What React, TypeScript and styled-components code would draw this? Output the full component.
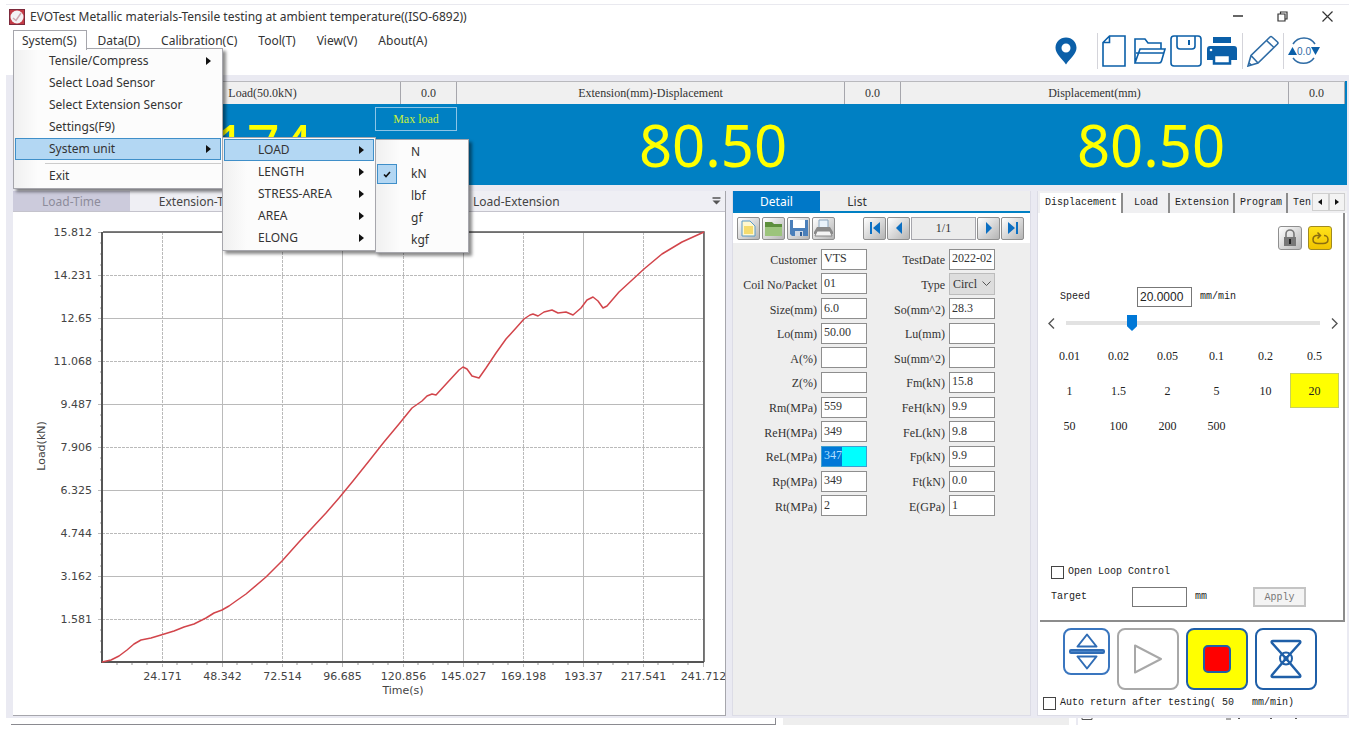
import React from 'react';
import styled, { createGlobalStyle, css } from 'styled-components';

const sans = "'Noto Sans', 'Open Sans', sans-serif";
const serif = "'Liberation Serif', serif";
const mono = "'Liberation Mono', monospace";

const color = {
  blue: '#0080c3',
  icon: '#0b5fa8',
  frame: '#eaeaf2',
  panel: '#eeeeee',
  line: '#a6a6ac',
  yellow: '#ffff00',
  highlight: '#b3d7f3',
  highlightLine: '#3f8fc9',
};

const GlobalStyle = createGlobalStyle`
  *, *::before, *::after { box-sizing: border-box; }
  body { margin: 0; background: #fff; color: #333; font: 12px/16px ${sans}; }
  button, input, select { font: inherit; color: inherit; margin: 0; border-radius: 0; }
  button { background: none; border: 0; padding: 0; }
  ul { list-style: none; margin: 0; padding: 0; }
  svg { display: block; }
`;

/* ---------- window frame ---------- */

const Page = styled.div`
  min-height: 100vh;
  padding: 4px 6px 0;
`;

const Window = styled.main`
  border-top: 1px solid #e9e9ef;
  background: ${color.frame};
`;

const Header = styled.header`
  display: flex;
  justify-content: space-between;
  height: 70px;
  background: #fff;
`;

const TitleBar = styled.div`
  display: flex;
  align-items: center;
  gap: 5px;
  height: 24px;
  padding-left: 3px;
`;

const Title = styled.h1`
  margin: 0;
  font-size: 12px;
  font-weight: 400;
  line-height: 16px;
`;

const MenuBar = styled.nav`
  display: flex;
  gap: 2px;
  padding-left: 7px;
  height: 22px;
`;

const MenuSlot = styled.div`
  position: relative;
`;

const MenuTitle = styled.button<{ $open?: boolean }>`
  height: 20px;
  padding: 0 9px 0 8px;
  margin-top: 1px;
  border: 1px solid transparent;
  border-bottom: 0;
  ${(p) =>
    p.$open &&
    css`
      position: relative;
      z-index: 4;
      border-color: ${color.line};
      background: #fff;
    `}
`;

const HeaderTools = styled.div`
  display: flex;
  flex-direction: column;
  align-items: flex-end;
`;

const WindowButtons = styled.div`
  display: flex;
  gap: 20px;
  height: 24px;
  padding-right: 9px;
`;

const WindowButton = styled.button`
  display: grid;
  place-items: center;
  width: 25px;
  height: 22px;
`;

const Toolbar = styled.div`
  display: flex;
  align-items: center;
  gap: 4px;
  height: 44px;
  padding-right: 29px;
`;

const ToolButton = styled.button<{ $width?: number; $after?: number }>`
  display: grid;
  justify-items: ${(p) => (p.$width ? 'start' : 'center')};
  align-items: center;
  width: ${(p) => p.$width ?? 32}px;
  height: 34px;
  margin-right: ${(p) => p.$after ?? 0}px;
`;

const ToolSeparator = styled.span`
  width: 1px;
  height: 36px;
  background: #d4d4da;
`;

/* ---------- drop-down menus ---------- */

const Menu = styled.ul<{ $top: number; $width: number; $root?: boolean }>`
  position: absolute;
  z-index: 3;
  top: ${(p) => p.$top}px;
  left: ${(p) => (p.$root ? '0' : '100%')};
  width: ${(p) => p.$width}px;
  margin-left: ${(p) => (p.$root ? 0 : 1)}px;
  padding: 1px;
  border: 1px solid ${color.line};
  background: linear-gradient(90deg, #f0f0f0 0, #fcfcfc 24px);
  box-shadow: 3px 3px 3px rgba(0, 0, 0, 0.45);
`;

const MenuItem = styled.li<{ $divided?: boolean }>`
  position: relative;
  ${(p) =>
    p.$divided &&
    css`
      margin-top: 3px;
      padding-top: 2px;
      background: linear-gradient(#ccc, #ccc) 30px 0 / 100% 1px no-repeat;
    `}
`;

const MenuEntry = styled.button<{ $active?: boolean }>`
  display: flex;
  align-items: center;
  justify-content: space-between;
  width: 100%;
  height: 22px;
  padding: 0 9px 0 33px;
  border: 1px solid ${(p) => (p.$active ? color.highlightLine : 'transparent')};
  background: ${(p) => (p.$active ? color.highlight : 'transparent')};
  text-align: left;
`;

const CheckMark = styled.span`
  position: absolute;
  top: 1px;
  left: 0;
  display: grid;
  place-items: center;
  width: 20px;
  height: 20px;
  border: 1px solid ${color.highlightLine};
  background: ${color.highlight};
`;

const Arrow = () => (
  <svg width="5" height="8" viewBox="0 0 5 8" aria-hidden="true">
    <path d="M0 0L5 4L0 8z" fill="#111" />
  </svg>
);

/* ---------- readouts ---------- */

const Readouts = styled.section`
  display: grid;
  grid-template-columns: repeat(3, 1fr);
  margin: 6px 2px 0 7px;
  border-right: 2px solid ${color.blue};
  background: ${color.blue};
`;

const Readout = styled.div`
  position: relative;
`;

const ReadoutHead = styled.div<{ $indent?: number }>`
  display: grid;
  grid-template-columns: 1fr 57px;
  height: 23px;
  padding-left: ${(p) => p.$indent ?? 0}px;
  border-top: 1px solid #b9b9bd;
  background: #f0f0f0;
  font: 12px/22px ${serif};
  text-align: center;
`;

const ReadoutRate = styled.span`
  border: solid ${color.line};
  border-width: 0 1px;
`;

const ReadoutValue = styled.output<{ $indent: number }>`
  display: block;
  height: 81px;
  padding-left: ${(p) => p.$indent}px;
  color: ${color.yellow};
  font-family: ${sans};
  font-size: 58px;
  line-height: 81px;
  text-align: center;
`;

const MaxLoad = styled.button`
  position: absolute;
  top: 26px;
  right: 0;
  width: 82px;
  height: 24px;
  border: 1px solid #8cc4e6;
  color: #c8f03c;
  font: 12px/16px ${serif};
`;

/* ---------- workspace ---------- */

const Workspace = styled.div`
  display: grid;
  grid-template-columns: minmax(0, 1fr) 299px 310px;
  gap: 6px;
  padding: 6px 2px 2px 7px;
`;

const ChartPanel = styled.section`
  border: solid ${color.line};
  border-width: 0 1px 1px 0;
  background: #fff;
`;

const ChartTabs = styled.div`
  display: flex;
  align-items: center;
  height: 21px;
  border-bottom: 1px solid #c4c3cc;
  background: #efeff4;
`;

const ChartTab = styled.button<{ $active?: boolean; $before?: number }>`
  height: 20px;
  margin-left: ${(p) => p.$before ?? 0}px;
  padding: 1px 29px 0;
  color: ${(p) => (p.$active ? '#8d8c9b' : '#444')};
  background: ${(p) => (p.$active ? '#cccbdc' : 'transparent')};
`;

const TabOverflow = styled.button`
  margin-left: auto;
  padding: 0 4px;
`;

const ChartSvg = styled.svg`
  width: 100%;
  height: auto;
  font-family: 'DejaVu Sans', sans-serif;
  font-size: 11px;
  fill: #444;
`;

/* ---------- detail panel ---------- */

const DetailPanel = styled.section`
  background: ${color.panel};
  border: solid #dcdce6;
  border-width: 0 1px 1px;
`;

const DetailTabs = styled.div`
  display: flex;
  height: 22px;
  border-bottom: 2px solid ${color.blue};
`;

const DetailTab = styled.button<{ $active?: boolean }>`
  width: ${(p) => (p.$active ? 87 : 74)}px;
  padding-top: 1px;
  color: ${(p) => (p.$active ? '#fff' : '#333')};
  background: ${(p) => (p.$active ? '#0078c8' : 'transparent')};
`;

const RecordBar = styled.div`
  display: flex;
  align-items: center;
  gap: 2px;
  height: 30px;
  padding: 0 4px;
  background: #fff;
`;

const RecordButton = styled.button`
  display: grid;
  place-items: center;
  width: 23px;
  height: 23px;
  border: 1px solid #8f8f8f;
  border-radius: 2px;
  background: linear-gradient(135deg, #fff, #b4b4b4);
`;

const RecordNav = styled.div`
  display: flex;
  margin-left: 26px;
  gap: 1px;
`;

const RecordCount = styled.output`
  width: 65px;
  border: 1px solid ${color.line};
  background: #ececec;
  font: 12px/21px ${serif};
  text-align: center;
`;

const DetailForm = styled.form`
  display: grid;
  grid-template-columns: 79px 46px 74px 46px;
  grid-auto-rows: 1fr;
  column-gap: 4px;
  align-items: center;
  height: 271px;
  margin-top: 4px;
  padding-left: 5px;
  font: 12px/16px ${serif};
`;

const FieldLabel = styled.label`
  padding-top: 2px;
  text-align: right;
  white-space: nowrap;
`;

const Field = styled.input<{ $selected?: boolean }>`
  width: 100%;
  height: 21px;
  padding: 0 2px 1px;
  border: 1px solid ${(p) => (p.$selected ? '#3f9fd0' : '#8e8e8e')};
  background: ${(p) => (p.$selected ? 'linear-gradient(90deg, #0078d7 20px, #00ffff 20px)' : '#fff')};
  color: ${(p) => (p.$selected ? '#b4e0ff' : '#333')};
`;

const TypeBox = styled.div`
  position: relative;
`;

const TypeSelect = styled.select`
  width: 100%;
  height: 22px;
  padding: 0 14px 0 3px;
  appearance: none;
  border: 1px solid #bcbcbc;
  background: #dddddd;
`;

const TypeChevron = styled.svg`
  position: absolute;
  top: 8px;
  right: 4px;
  pointer-events: none;
`;

/* ---------- control panel ---------- */

const ControlPanel = styled.aside`
  display: flex;
  flex-direction: column;
  padding: 2px 2px 0;
  background: linear-gradient(#f0f0f2 22px, #fff 22px);
  border: solid #dcdce6;
  border-width: 0 0 1px 1px;
  font: 10px/16px ${mono};
  color: #222;
`;

const ControlTabs = styled.div`
  display: flex;
  height: 20px;
`;

const ControlTab = styled.button<{ $active?: boolean; $cut?: boolean }>`
  flex: none;
  width: ${(p) => (p.$cut ? '24px' : 'auto')};
  overflow: hidden;
  padding: 0 4px 0 5px;
  border-right: ${(p) => (p.$cut ? 0 : 2)}px solid #8c8c8c;
  background: ${(p) => (p.$active ? '#fff' : 'transparent')};
`;

const TabScroll = styled.button`
  display: grid;
  place-items: center;
  flex: 1;
  height: 18px;
  border: 1px solid #cfcfcf;
  background: #f3f3f3;
`;

const ControlBody = styled.div`
  flex: 1;
  display: flex;
  flex-direction: column;
  padding: 13px 4px 13px 5px;
  border: solid #8c8c8c;
  border-width: 0 2px 2px 0;
`;

const ModeRow = styled.div`
  display: flex;
  justify-content: flex-end;
  gap: 6px;
  padding-right: 7px;
`;

const ModeButton = styled.button<{ $on?: boolean }>`
  display: grid;
  place-items: center;
  width: 24px;
  height: 24px;
  border: 1px solid ${(p) => (p.$on ? '#a08a20' : '#8f8f8f')};
  border-radius: 3px;
  background: ${(p) => (p.$on ? 'linear-gradient(#ffe21a, #f0c400)' : 'linear-gradient(135deg, #fff, #b8b8b8)')};
`;

const SpeedRow = styled.div`
  display: grid;
  grid-template-columns: 77px 55px 1fr;
  align-items: center;
  margin-top: 37px;
  padding-left: 15px;
`;

const TextBox = styled.input`
  width: 55px;
  height: 20px;
  padding: 0 2px;
  border: 1px solid #777;
  background: #fff;
  font: 12px/16px 'Liberation Sans', sans-serif;
`;

const Unit = styled.span`
  padding-left: 8px;
`;

const SliderRow = styled.div`
  display: flex;
  align-items: center;
  justify-content: space-between;
  gap: 11px;
  margin-top: 6px;
  height: 20px;
  padding: 0 1px 0 3px;
`;

const Slider = styled.input`
  flex: 1;
  min-width: 0;
  height: 16px;
  appearance: none;
  background: linear-gradient(#e2e2e2, #e2e2e2) 0 6px / 100% 4px no-repeat;
  &::-webkit-slider-thumb {
    appearance: none;
    width: 10px;
    height: 16px;
    background: #0078d7;
    clip-path: polygon(0 0, 100% 0, 100% 70%, 50% 100%, 0 70%);
  }
`;

const Presets = styled.div`
  display: grid;
  grid-template-columns: repeat(6, 1fr);
  margin-top: 5px;
`;

const Preset = styled.button<{ $on?: boolean }>`
  height: 35px;
  border: 1px solid ${(p) => (p.$on ? '#c8d060' : 'transparent')};
  background: ${(p) => (p.$on ? color.yellow : 'transparent')};
  font: 12px/16px ${serif};
`;

const Check = styled.label`
  display: flex;
  align-items: center;
  gap: 4px;
  line-height: 18px;
  white-space: pre;
`;

const CheckBox = styled.input`
  appearance: none;
  width: 13px;
  height: 13px;
  border: 1px solid #444;
  background: #fff;
`;

const LoopBox = styled.div`
  margin-top: auto;
  padding-left: 6px;
`;

const TargetRow = styled.div`
  display: grid;
  grid-template-columns: 81px 55px 1fr 53px;
  align-items: center;
  height: 20px;
  margin-top: 6px;
  padding-right: 33px;
  line-height: 18px;
`;

const ApplyButton = styled.button`
  height: 20px;
  border: 2px solid #c4c4c4;
  background: #f4f4f4;
  color: #777;
`;

const Actions = styled.div`
  display: flex;
  gap: 7px;
  padding: 6px 0 4px 23px;
`;

const Action = styled.button<{ $size?: number; $tone?: string; $fill?: string }>`
  display: grid;
  place-items: center;
  width: ${(p) => p.$size ?? 62}px;
  height: ${(p) => p.$size ?? 62}px;
  border: 2px solid ${(p) => p.$tone ?? '#1f5fa8'};
  border-radius: 8px;
  background: ${(p) => p.$fill ?? '#fff'};
`;

const AutoReturn = styled.div`
  padding: 0 0 3px 3px;
`;

/* ---------- lower window edge ---------- */

const Behind = styled.div`
  display: grid;
  grid-template-columns: 765px 286px 1fr;
  gap: 7px;
  height: 7px;
  padding-left: 5px;
`;

const BehindPane = styled.div<{ $kind: 'chart' | 'detail' | 'control' }>`
  background: ${(p) => (p.$kind === 'detail' ? color.panel : '#fff')};
  border: solid #8a8a90;
  border-width: ${(p) => (p.$kind === 'chart' ? '0 1px 1px 0' : '0')};
  border-left: ${(p) => (p.$kind === 'control' ? `2px solid ${color.frame}` : 0)};
`;

/* ---------- data ---------- */

const yTicks = ['15.812', '14.231', '12.65', '11.068', '9.487', '7.906', '6.325', '4.744', '3.162', '1.581'];
const xTicks = ['24.171', '48.342', '72.514', '96.685', '120.856', '145.027', '169.198', '193.37', '217.541', '241.712'];

const plot = { left: 90, right: 691, top: 20, bottom: 450 };

const curve = [
  [89, 450], [98, 448], [106, 444], [114, 438], [121, 432], [128, 428], [138, 426], [148, 423], [161, 419],
  [171, 415], [181, 412], [193, 406], [201, 401], [209, 398], [216, 394], [223, 389], [233, 382], [253, 365],
  [269, 349], [286, 330], [299, 316], [313, 301], [326, 286], [340, 269], [356, 249], [371, 230], [386, 212],
  [399, 196], [409, 189], [414, 184], [419, 182], [423, 183], [434, 171], [446, 158], [450, 155], [454, 157],
  [459, 164], [466, 166], [473, 156], [483, 141], [493, 127], [503, 116], [511, 107], [517, 103], [520, 102],
  [525, 104], [531, 100], [539, 98], [545, 101], [553, 100], [560, 103], [568, 96], [574, 88], [580, 85],
  [585, 89], [590, 96], [594, 94], [606, 80], [618, 69], [631, 57], [649, 42], [669, 30], [691, 20],
];

const fields: [string, string][] = [
  ['Customer', 'VTS'], ['TestDate', '2022-02'],
  ['Coil No/Packet', '01'], ['Type', 'Circl'],
  ['Size(mm)', '6.0'], ['So(mm^2)', '28.3'],
  ['Lo(mm)', '50.00'], ['Lu(mm)', ''],
  ['A(%)', ''], ['Su(mm^2)', ''],
  ['Z(%)', ''], ['Fm(kN)', '15.8'],
  ['Rm(MPa)', '559'], ['FeH(kN)', '9.9'],
  ['ReH(MPa)', '349'], ['FeL(kN)', '9.8'],
  ['ReL(MPa)', '347'], ['Fp(kN)', '9.9'],
  ['Rp(MPa)', '349'], ['Ft(kN)', '0.0'],
  ['Rt(MPa)', '2'], ['E(GPa)', '1'],
];

const presets = ['0.01', '0.02', '0.05', '0.1', '0.2', '0.5', '1', '1.5', '2', '5', '10', '20', '50', '100', '200', '500'];

/* ---------- parts ---------- */

const UnitMenu = () => (
  <Menu $top={0} $width={94}>
    {['N', 'kN', 'lbf', 'gf', 'kgf'].map((unit) => (
      <MenuItem key={unit}>
        {unit === 'kN' && (
          <CheckMark>
            <svg width="8" height="7" viewBox="0 0 8 7" aria-hidden="true">
              <path d="M1 3.5L3 5.5L7 1" fill="none" stroke="#111" strokeWidth="1.6" />
            </svg>
          </CheckMark>
        )}
        <MenuEntry>{unit}</MenuEntry>
      </MenuItem>
    ))}
  </Menu>
);

const QuantityMenu = () => (
  <Menu $top={-1} $width={154}>
    {['LOAD', 'LENGTH', 'STRESS-AREA', 'AREA', 'ELONG'].map((name) => (
      <MenuItem key={name}>
        <MenuEntry $active={name === 'LOAD'}>
          {name}
          <Arrow />
        </MenuEntry>
        {name === 'LOAD' && <UnitMenu />}
      </MenuItem>
    ))}
  </Menu>
);

const SystemMenu = () => (
  <Menu $root $top={19} $width={210}>
    <MenuItem><MenuEntry>Tensile/Compress<Arrow /></MenuEntry></MenuItem>
    <MenuItem><MenuEntry>Select Load Sensor</MenuEntry></MenuItem>
    <MenuItem><MenuEntry>Select Extension Sensor</MenuEntry></MenuItem>
    <MenuItem><MenuEntry>Settings(F9)</MenuEntry></MenuItem>
    <MenuItem>
      <MenuEntry $active>System unit<Arrow /></MenuEntry>
      <QuantityMenu />
    </MenuItem>
    <MenuItem $divided><MenuEntry>Exit</MenuEntry></MenuItem>
  </Menu>
);

const MainToolbar = () => {
  const s = { fill: 'none', stroke: color.icon, strokeWidth: 1.6 };
  return (
    <Toolbar>
      <ToolButton aria-label="Locate" $after={11}>
        <svg width="22" height="28" viewBox="0 0 22 28">
          <path d="M11 0.5C5 0.5 0.5 5 0.5 10.8C0.5 17 6.5 21 11 27.5C15.500 21 21.500 17 21.500 10.800C21.500 5 17 0.500 11 0.500zM11 6.500a4.500 4.500 0 1 1 0 9a4.500 4.500 0 0 1 0-9z" fill={color.icon} />
        </svg>
      </ToolButton>
      <ToolSeparator />
      <ToolButton aria-label="New" $width={28}>
        <svg width="24" height="32" viewBox="0 0 24 32">
          <path d="M7.500 1H23V31H1V7.500z M7.500 1V7.500H1" {...s} />
        </svg>
      </ToolButton>
      <ToolButton aria-label="Open">
        <svg width="32" height="26" viewBox="0 0 32 26">
          <path d="M1 25V1H11L14 5H27V11M1 25L6 11H31L27.500 23Q27 25 25 25zM2 15H29.500" {...s} />
        </svg>
      </ToolButton>
      <ToolButton aria-label="Save">
        <svg width="32" height="32" viewBox="0 0 32 32">
          <rect x="1" y="1" width="30" height="30" rx="3" {...s} />
          <path d="M7 1V11Q7 14 10 14H22Q25 14 25 11V1" {...s} />
          <path d="M19 5V10" {...s} strokeWidth="2" />
        </svg>
      </ToolButton>
      <ToolButton aria-label="Print">
        <svg width="30" height="28" viewBox="0 0 30 28">
          <rect x="6" y="0" width="18" height="6" fill={color.icon} />
          <path d="M3 9H27Q30 9 30 12V23H24V17H6V23H0V12Q0 9 3 9z" fill={color.icon} />
          <rect x="7" y="18" width="16" height="8.500" fill="#fff" stroke={color.icon} strokeWidth="2.500" />
          <circle cx="4" cy="13" r="1.300" fill="#fff" />
        </svg>
      </ToolButton>
      <ToolSeparator />
      <ToolButton aria-label="Edit">
        <svg width="32" height="32" viewBox="0 0 32 32">
          <path d="M1 31L4 20.500L23 2Q24 1 25 2L30.500 7Q31.500 8 30.500 9L11 28zM4 20.500L11 28M19.500 5.500L27 12.500M1.500 27.500L4.500 30" {...s} stroke="#2f6ca5" />
        </svg>
      </ToolButton>
      <ToolSeparator />
      <ToolButton aria-label="Zero">
        <svg width="32" height="28" viewBox="0 0 32 28">
          <path d="M5 7A13 13 0 0 1 27 7M5 21A13 13 0 0 0 26 21" fill="none" stroke="#2f6ca5" strokeWidth="1.500" />
          <path d="M0 18L4.500 10L9 18zM23 10H32L27.500 18z" fill={color.icon} />
          <text x="16" y="18" textAnchor="middle" fontFamily="Liberation Sans" fontSize="10" fill="#2f6ca5">0.0</text>
        </svg>
      </ToolButton>
    </Toolbar>
  );
};

const Chart = () => {
  const stepX = (plot.right - plot.left) / 10;
  const stepY = (plot.bottom - plot.top) / 10;
  return (
    <ChartSvg viewBox="0 0 712 503" role="img" aria-label="Load over time">
      {xTicks.map((label, i) => {
        const x = Math.round(plot.left + stepX * (i + 1)) - 0.5;
        return (
          <g key={label}>
            <path d={`M${x} ${plot.top}V${plot.bottom + 5}`} stroke="#bababa" strokeDasharray={i % 2 ? undefined : '3 1'} />
            <path d={[1, 2, 3].map((n) => `M${Math.round(x - (stepX * n) / 4)} ${plot.bottom}v3`).join('')} stroke="#999" />
            <text x={x} y={plot.bottom + 18} textAnchor="middle">{label}</text>
          </g>
        );
      })}
      {yTicks.map((label, i) => {
        const y = Math.round(plot.top + stepY * i) + 0.5;
        return (
          <g key={label}>
            <path d={`M${plot.left - 5} ${y}H${plot.right}`} stroke="#bababa" strokeDasharray={i % 2 ? '3 1' : undefined} />
            <path d={[1, 2, 3].map((n) => `M${plot.left - 3} ${Math.round(y + (stepY * n) / 4)}h3`).join('')} stroke="#999" />
            <text x={plot.left - 11} y={y + 3} textAnchor="end">{label}</text>
          </g>
        );
      })}
      <path d={`M${plot.left} ${plot.top}H${plot.right}V${plot.bottom}`} fill="none" stroke="#555" strokeWidth="1.5" />
      <path d={`M${plot.left - 1} ${plot.top}V${plot.bottom}H${plot.right}`} fill="none" stroke="#555" strokeWidth="2" />
      <polyline points={curve.map((p) => p.join(',')).join(' ')} fill="none" stroke="#d2454b" strokeWidth="1.500" strokeLinejoin="round" />
      <text x="390" y="482" textAnchor="middle">Time(s)</text>
      <text transform="translate(32 234) rotate(-90)" textAnchor="middle">Load(kN)</text>
    </ChartSvg>
  );
};

const Detail = () => (
  <DetailPanel>
    <DetailTabs>
      <DetailTab $active>Detail</DetailTab>
      <DetailTab>List</DetailTab>
    </DetailTabs>
    <RecordBar>
      <RecordButton aria-label="New record">
        <svg width="17" height="17" viewBox="0 0 17 17">
          <path d="M2 1H10L15 6V16H2z" fill="#fff8cf" stroke="#5a9ac8" />
          <path d="M4 6H13V14H4z" fill="#f5dc6e" />
        </svg>
      </RecordButton>
      <RecordButton aria-label="Open record">
        <svg width="19" height="17" viewBox="0 0 19 17">
          <path d="M1 2H8L10 4H18V8H1z" fill="#5d8f3c" />
          <path d="M1 7H18V16H1z" fill="#9cc47c" />
        </svg>
      </RecordButton>
      <RecordButton aria-label="Save record">
        <svg width="18" height="18" viewBox="0 0 18 18">
          <path d="M0 1H18V17H2L0 15z" fill="#4a7fba" />
          <path d="M3 1H15V9H3z" fill="#fff" />
          <path d="M5 12H13V17H5z" fill="#cfd8e4" />
          <path d="M10 13H12V17H10z" fill="#2c5c94" />
        </svg>
      </RecordButton>
      <RecordButton aria-label="Print record">
        <svg width="19" height="18" viewBox="0 0 19 18">
          <path d="M5 1H14V9H5z" fill="#eaf3fb" stroke="#8aa5bd" />
          <path d="M3 8H16L19 13V15H0V13z" fill="#8a8a8a" />
          <path d="M3 12H16L18 17H1z" fill="#f4f4f4" stroke="#888" />
        </svg>
      </RecordButton>
      <RecordNav>
        <RecordButton aria-label="First">
          <svg width="12" height="12" viewBox="0 0 12 12"><path d="M1 0H3V12H1zM11 0V12L4 6z" fill="#0b6fc2" /></svg>
        </RecordButton>
        <RecordButton aria-label="Previous">
          <svg width="6" height="12" viewBox="0 0 6 12"><path d="M6 0V12L0 6z" fill="#0b6fc2" /></svg>
        </RecordButton>
        <RecordCount>1/1</RecordCount>
        <RecordButton aria-label="Next">
          <svg width="6" height="12" viewBox="0 0 6 12"><path d="M0 0V12L6 6z" fill="#0b6fc2" /></svg>
        </RecordButton>
        <RecordButton aria-label="Last">
          <svg width="12" height="12" viewBox="0 0 12 12"><path d="M9 0H11V12H9zM1 0V12L8 6z" fill="#0b6fc2" /></svg>
        </RecordButton>
      </RecordNav>
    </RecordBar>
    <DetailForm>
      {fields.map(([label, value]) => (
        <React.Fragment key={label}>
          <FieldLabel htmlFor={label}>{label}</FieldLabel>
          {label === 'Type' ? (
            <TypeBox>
              <TypeSelect id={label}><option>{value}</option></TypeSelect>
              <TypeChevron width="9" height="6" viewBox="0 0 9 6">
                <path d="M0.500 0.500L4.500 4.500L8.500 0.500" fill="none" stroke="#555" />
              </TypeChevron>
            </TypeBox>
          ) : (
            <Field id={label} defaultValue={value} $selected={label === 'ReL(MPa)'} />
          )}
        </React.Fragment>
      ))}
    </DetailForm>
  </DetailPanel>
);

const Chevron = ({ d }: { d: string }) => (
  <svg width="7" height="11" viewBox="0 0 7 11" aria-hidden="true">
    <path d={d} fill="none" stroke="#555" strokeWidth="1.400" />
  </svg>
);

const Control = () => (
  <ControlPanel>
    <ControlTabs>
      <ControlTab $active>Displacement</ControlTab>
      <ControlTab>&nbsp;Load&nbsp;</ControlTab>
      <ControlTab>Extension</ControlTab>
      <ControlTab>Program</ControlTab>
      <ControlTab $cut>Ten</ControlTab>
      <TabScroll aria-label="Previous tabs">
        <svg width="4" height="6" viewBox="0 0 4 6"><path d="M4 0V6L0 3z" fill="#111" /></svg>
      </TabScroll>
      <TabScroll aria-label="Next tabs">
        <svg width="4" height="6" viewBox="0 0 4 6"><path d="M0 0V6L4 3z" fill="#111" /></svg>
      </TabScroll>
    </ControlTabs>
    <ControlBody>
      <ModeRow>
        <ModeButton aria-label="Lock">
          <svg width="14" height="18" viewBox="0 0 14 18">
            <path d="M3 8V5A4 4 0 0 1 11 5V8" fill="none" stroke="#777" strokeWidth="1.600" />
            <rect x="1" y="8" width="12" height="9" fill="#777" />
            <path d="M6 10H8V15H6z" fill="#222" />
          </svg>
        </ModeButton>
        <ModeButton aria-label="Loop" $on>
          <svg width="17" height="14" viewBox="0 0 17 14">
            <path d="M4 4.500C2 5 1 7 1 8.500C1 11 3 12.500 6 12.500H11C14 12.500 16 11 16 8.500C16 6 14 4.500 12 4.500M3.500 4.500H8M5.500 1.500L8.500 4.500L5.500 7.500" fill="none" stroke="#8a6d10" strokeWidth="1.500" />
          </svg>
        </ModeButton>
      </ModeRow>
      <SpeedRow>
        <label htmlFor="speed">Speed</label>
        <TextBox id="speed" defaultValue="20.0000" />
        <Unit>mm/min</Unit>
      </SpeedRow>
      <SliderRow>
        <button aria-label="Slower"><Chevron d="M6 0.500L1 5.500L6 10.500" /></button>
        <Slider type="range" aria-label="Speed" min="0" max="100" defaultValue="25" />
        <button aria-label="Faster"><Chevron d="M1 0.500L6 5.500L1 10.500" /></button>
      </SliderRow>
      <Presets>
        {presets.map((p) => (
          <Preset key={p} $on={p === '20'}>{p}</Preset>
        ))}
      </Presets>
      <LoopBox>
        <Check><CheckBox type="checkbox" />Open Loop Control</Check>
        <TargetRow>
          <label htmlFor="target">Target</label>
          <TextBox id="target" />
          <Unit>mm</Unit>
          <ApplyButton>Apply</ApplyButton>
        </TargetRow>
      </LoopBox>
    </ControlBody>
    <Actions>
      <Action aria-label="Move crosshead" $size={47} $tone="#3a76bf">
        <svg width="36" height="38" viewBox="0 0 36 38" fill="none" stroke="#2f6cb5" strokeWidth="2" strokeLinejoin="round">
          <path d="M18 1.500L27.500 13.500H8.500zM8.500 23.500H27.500L18 35.500z" />
          <rect x="1" y="17" width="34" height="3" rx="1" fill="#4a84c8" />
        </svg>
      </Action>
      <Action aria-label="Start" $tone="#a8a8a8">
        <svg width="30" height="30" viewBox="0 0 30 30" fill="none" stroke="#a8a8a8" strokeWidth="2" strokeLinejoin="round">
          <path d="M2 1.500L28 15L2 28.500z" />
        </svg>
      </Action>
      <Action aria-label="Stop" $fill={color.yellow}>
        <svg width="28" height="28" viewBox="0 0 28 28">
          <rect x="1" y="1" width="26" height="26" rx="4" fill="#f00" stroke="#1f5fa8" strokeWidth="2" />
        </svg>
      </Action>
      <Action aria-label="Return">
        <svg width="32" height="40" viewBox="0 0 32 40" fill="none" stroke="#1f5fa8" strokeWidth="2.500" strokeLinejoin="round">
          <path d="M3 2H29Q31 2 30 4L16 19.500L2 4Q1 2 3 2zM3 38H29Q31 38 30 36L16 19.500L2 36Q1 38 3 38z" />
          <circle cx="16" cy="19.500" r="6" strokeWidth="2" />
          <circle cx="16" cy="19.500" r="1.500" strokeWidth="2" />
        </svg>
      </Action>
    </Actions>
    <AutoReturn>
      <Check><CheckBox type="checkbox" />{'Auto return after testing( 50   mm/min)'}</Check>
    </AutoReturn>
  </ControlPanel>
);

export default function App() {
  return (
    <Page>
      <GlobalStyle />
      <Window>
        <Header>
          <div>
            <TitleBar>
              <svg width="16" height="16" viewBox="0 0 16 16" aria-hidden="true">
                <rect x="0.500" y="0.500" width="15" height="15" fill="#c23a45" stroke="#7c2a3c" />
                <circle cx="8" cy="8" r="6.500" fill="#f3f3f5" />
                <path d="M4 9L7 11.500L12 4" fill="none" stroke="#d0a8b0" strokeWidth="1.500" />
              </svg>
              <Title>EVOTest Metallic materials-Tensile testing at ambient temperature((ISO-6892))</Title>
            </TitleBar>
            <MenuBar>
              <MenuSlot>
                <MenuTitle $open>System(S)</MenuTitle>
                <SystemMenu />
              </MenuSlot>
              <MenuTitle>Data(D)</MenuTitle>
              <MenuTitle>Calibration(C)</MenuTitle>
              <MenuTitle>Tool(T)</MenuTitle>
              <MenuTitle>View(V)</MenuTitle>
              <MenuTitle>About(A)</MenuTitle>
            </MenuBar>
          </div>
          <HeaderTools>
            <WindowButtons>
              <WindowButton aria-label="Minimize">
                <svg width="10" height="2" viewBox="0 0 10 2"><path d="M0 1H10" stroke="#333" strokeWidth="1.500" /></svg>
              </WindowButton>
              <WindowButton aria-label="Restore">
                <svg width="11" height="11" viewBox="0 0 11 11" fill="none" stroke="#333" strokeWidth="1.200">
                  <path d="M1 3H8V10H1zM3.500 3V1H10V8H8" />
                </svg>
              </WindowButton>
              <WindowButton aria-label="Close">
                <svg width="11" height="11" viewBox="0 0 11 11"><path d="M0.500 0.500L10.500 10.500M10.500 0.500L0.500 10.500" stroke="#333" strokeWidth="1.200" /></svg>
              </WindowButton>
            </WindowButtons>
            <MainToolbar />
          </HeaderTools>
        </Header>

        <Readouts>
          <Readout>
            <ReadoutHead $indent={112}><span>Load(50.0kN)</span><ReadoutRate>0.0</ReadoutRate></ReadoutHead>
            <ReadoutValue $indent={8}>0.174</ReadoutValue>
            <MaxLoad>Max load</MaxLoad>
          </Readout>
          <Readout>
            <ReadoutHead><span>Extension(mm)-Displacement</span><ReadoutRate>0.0</ReadoutRate></ReadoutHead>
            <ReadoutValue $indent={68}>80.50</ReadoutValue>
          </Readout>
          <Readout>
            <ReadoutHead><span>Displacement(mm)</span><ReadoutRate>0.0</ReadoutRate></ReadoutHead>
            <ReadoutValue $indent={56}>80.50</ReadoutValue>
          </Readout>
        </Readouts>

        <Workspace>
          <ChartPanel>
            <ChartTabs>
              <ChartTab $active>Load-Time</ChartTab>
              <ChartTab>Extension-Time</ChartTab>
              <ChartTab $before={170}>Load-Extension</ChartTab>
              <TabOverflow aria-label="More charts">
                <svg width="9" height="8" viewBox="0 0 9 8"><path d="M0.500 1H8.500" stroke="#555" strokeWidth="1.500" /><path d="M0.500 3.500H8.500L4.500 7.500z" fill="#555" /></svg>
              </TabOverflow>
            </ChartTabs>
            <Chart />
          </ChartPanel>
          <Detail />
          <Control />
        </Workspace>
      </Window>
      <Behind aria-hidden="true">
        <BehindPane $kind="chart" />
        <BehindPane $kind="detail" />
        <BehindPane $kind="control">
          <svg width="260" height="6" viewBox="0 0 260 6">
            <path d="M4 0V1.500H14V0M148 1H153M160 0.500H162M192 0.500H194M217 0.500H219" fill="none" stroke="#555" />
          </svg>
        </BehindPane>
      </Behind>
    </Page>
  );
}
